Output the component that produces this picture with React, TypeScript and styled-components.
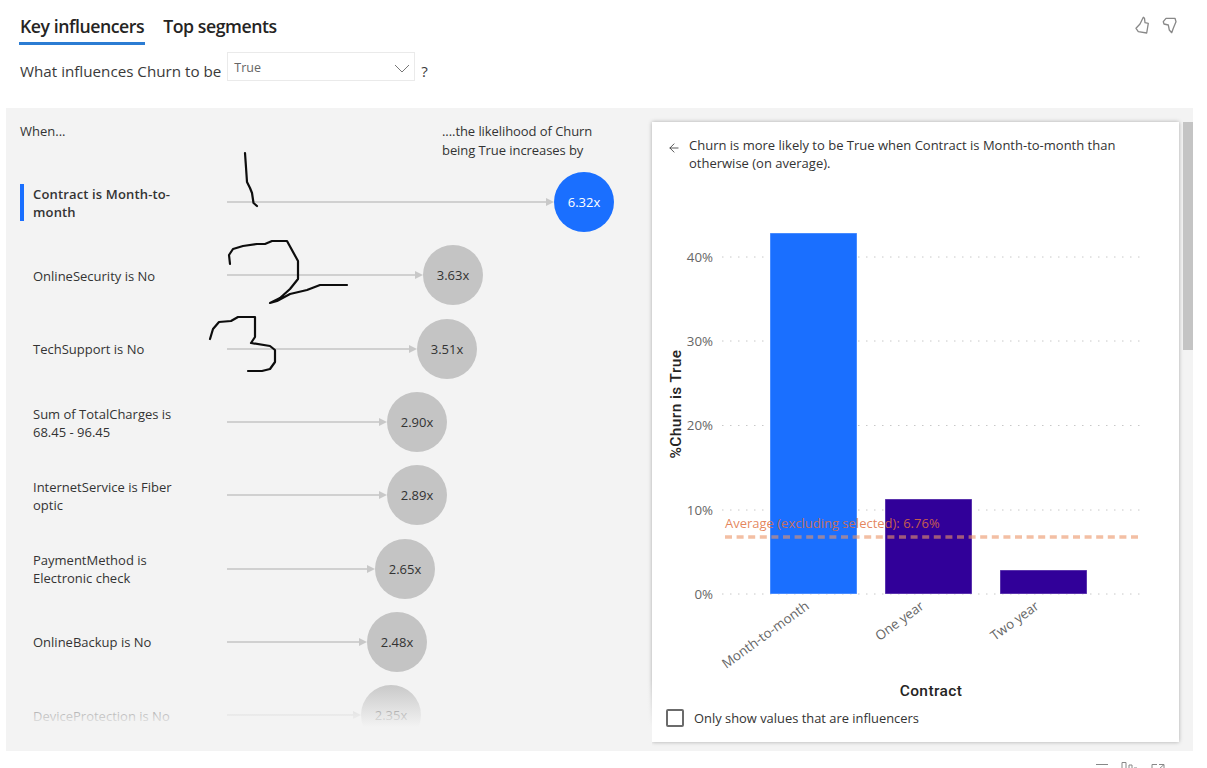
// App.tsx
import React from 'react';
import styled, { createGlobalStyle } from 'styled-components';
import { ArrowLeft } from 'lucide-react';

const FONT = '"Open Sans", "Noto Sans", sans-serif';

const influencers = [
  { label: 'Contract is Month-to-month', value: 6.32, selected: true },
  { label: 'OnlineSecurity is No', value: 3.63 },
  { label: 'TechSupport is No', value: 3.51 },
  { label: 'Sum of TotalCharges is 68.45 - 96.45', value: 2.9 },
  { label: 'InternetService is Fiber optic', value: 2.89 },
  { label: 'PaymentMethod is Electronic check', value: 2.65 },
  { label: 'OnlineBackup is No', value: 2.48 },
  { label: 'DeviceProtection is No', value: 2.35 },
];

// arrow length grows with the multiplier
const arrowWidth = (value: number) => Math.round(453 + (value - 3.63) * 48.7 - 30 - 227);

const gridLines = [
  { label: '0%', y: 594 },
  { label: '10%', y: 510 },
  { label: '20%', y: 425.5 },
  { label: '30%', y: 341 },
  { label: '40%', y: 257 },
];

const bars = [
  { label: 'Month-to-month', x: 770, top: 233, color: '#1a6fff' },
  { label: 'One year', x: 885, top: 499, color: '#310099' },
  { label: 'Two year', x: 1000, top: 570, color: '#310099' },
];

const scribbles = [
  'M245 153 L245.7 163 L247 182 L250 188 L252 193 L253.5 203 L257 206',
  'M230 264 L229 255 L233 249 L243 246 L257 244 L265 244 L272 241 L287 241 L298 261 L298 279 L290 289 L280 298 L270 303 L277 301 L290 294 L307 290 L320 285 L347 285',
  'M210 339 L213 329 L219 322 L231 321 L238 317 L255 317 L255 337 L251 343 L270 346 L275 350 L275 362 L270 369 L262 371 L248 371',
];

const App: React.FC = () => {
  return (
    <Page>
      <GlobalStyle />
      <Header>
        <Tabs>
          <Tab $active>Key influencers</Tab>
          <Tab>Top segments</Tab>
        </Tabs>
        <Feedback>
          <svg width="15" height="18" viewBox="0 0 15 18" fill="none" stroke="currentColor" strokeWidth="1.3" strokeLinejoin="round">
            <path d="M8.3 1.3 L5 8 L1 12.3 L3.3 15.7 L11.7 17 L13.3 7.3 L10 6.7 L9.5 2.3 Z" />
          </svg>
          <svg width="15" height="18" viewBox="0 0 15 18" fill="none" stroke="currentColor" strokeWidth="1.3" strokeLinejoin="round">
            <path d="M1.3 5.7 L4 2.3 L13 2.3 L14 5.7 L11.3 12.3 L9.7 16.7 L7.3 14 L6.3 9 L2 8 Z" />
          </svg>
        </Feedback>
      </Header>
      <Question>
        What influences Churn to be
        <Select>
          True
          <svg width="16" height="9" viewBox="0 0 16 9" fill="none" stroke="#777" strokeWidth="1">
            <path d="M1 1 L8 8 L15 1" />
          </svg>
        </Select>
        ?
      </Question>
      <Panel>
        <LeftPane>
          <ColumnHeads>
            <span>When...</span>
            <Likelihood>
              ....the likelihood of Churn
              <br />
              being True increases by
            </Likelihood>
          </ColumnHeads>
          <List>
            {influencers.map(item => (
              <Row key={item.label}>
                <Marker $selected={item.selected} />
                <Label $selected={item.selected}>{item.label}</Label>
                <Arrow style={{ width: arrowWidth(item.value) }}>
                  <ArrowLine />
                  <ArrowHead />
                </Arrow>
                <Bubble $selected={item.selected}>{item.value.toFixed(2)}x</Bubble>
              </Row>
            ))}
          </List>
          <Fade />
        </LeftPane>
        <Card>
          <CardTitle>
            <ArrowLeft size={14} strokeWidth={1.4} color="#333" />
            <p>Churn is more likely to be True when Contract is Month-to-month than otherwise (on average).</p>
          </CardTitle>
          <Chart viewBox="652 180 527 520">
            {gridLines.map(line => (
              <g key={line.label}>
                <line x1={722} x2={1140} y1={line.y} y2={line.y} stroke="#c8c8c8" strokeWidth={1} strokeDasharray="1.5 6.5" />
                <AxisText x={713} y={line.y + 4.6} textAnchor="end">
                  {line.label}
                </AxisText>
              </g>
            ))}
            {bars.map(bar => (
              <g key={bar.label}>
                <rect x={bar.x} y={bar.top} width={87} height={594 - bar.top} fill={bar.color} stroke="#fff" strokeOpacity={0.4} />
                <AxisText x={bar.x + 40} y={608} textAnchor="end" transform={`rotate(-36 ${bar.x + 40} 608)`}>
                  {bar.label}
                </AxisText>
              </g>
            ))}
            <line x1={725} x2={1138} y1={537} y2={537} stroke="#eb9468" strokeOpacity={0.6} strokeWidth={3.5} strokeDasharray="7 4.6" />
            <AverageText x={725} y={528}>
              Average (excluding selected): 6.76%
            </AverageText>
            <AxisTitle x={931} y={696} textAnchor="middle">
              Contract
            </AxisTitle>
            <AxisTitle x={681} y={404} textAnchor="middle" transform="rotate(-90 681 404)">
              %Churn is True
            </AxisTitle>
          </Chart>
          <CheckRow>
            <CheckBox />
            Only show values that are influencers
          </CheckRow>
        </Card>
        <Scrollbar>
          <ScrollThumb />
        </Scrollbar>
      </Panel>
      <Footer>
        <svg width="100" height="10" viewBox="0 0 100 10" fill="none" stroke="#888" strokeWidth="1">
          <path d="M0 3.5 H12" />
          <path d="M26 10 V1.5 H30 V10 M33 10 V4 H36 V10 M38 10 V7 H41" />
          <path d="M56 10 V3.5 H61 M68 3.5 H63 M68 3.5 V10 M62 9 L68 3.5" />
          <path d="M85 7 L87 9 L89 7" strokeDasharray="1 1" />
        </svg>
      </Footer>
      <Scribbles viewBox="0 0 1207 768">
        {scribbles.map(d => (
          <path key={d} d={d} fill="none" stroke="#0d0d0d" strokeWidth={2.2} strokeLinejoin="round" strokeLinecap="round" />
        ))}
      </Scribbles>
    </Page>
  );
};

const GlobalStyle = createGlobalStyle`
  html, body {
    margin: 0;
    height: 768px;
    overflow: hidden;
    background: #fff;
  }
  body {
    font-family: ${FONT};
    color: #333;
  }
`;

const Page = styled.div`
  position: relative;
  width: 1207px;
  height: 768px;
  overflow: hidden;
`;

const Header = styled.div`
  display: flex;
  justify-content: space-between;
  align-items: flex-start;
  height: 52px;
  padding: 13px 30px 0 19px;
  box-sizing: border-box;
`;

const Tabs = styled.div`
  display: flex;
  gap: 17px;
`;

const Tab = styled.div<{ $active?: boolean }>`
  height: 29px;
  padding: 0 1px;
  font-size: 17.7px;
  line-height: 27px;
  font-weight: 600;
  letter-spacing: -0.45px;
  color: #252423;
  border-bottom: ${p => (p.$active ? '3px solid #2b7cd3' : '3px solid transparent')};
`;

const Feedback = styled.div`
  display: flex;
  gap: 12px;
  padding-top: 3px;
  color: #888;
`;

const Question = styled.div`
  display: flex;
  align-items: flex-end;
  gap: 6px;
  height: 29px;
  padding-left: 20px;
  font-size: 15.2px;
  line-height: 20px;
  color: #3a3a3a;
`;

const Select = styled.div`
  display: flex;
  justify-content: space-between;
  align-items: center;
  width: 188px;
  height: 29px;
  box-sizing: border-box;
  padding: 3px 4px 0 6px;
  border: 1px solid #eaeaea;
  font-size: 12.5px;
  color: #666;
`;

const Panel = styled.div`
  display: flex;
  width: 1187px;
  height: 643px;
  margin: 27px 0 0 6px;
  background: #f3f3f3;
`;

const LeftPane = styled.div`
  position: relative;
  width: 646px;
  overflow: hidden;
`;

const ColumnHeads = styled.div`
  display: flex;
  justify-content: space-between;
  height: 57.5px;
  padding: 14px 0 0 14px;
  box-sizing: border-box;
  font-size: 13px;
  line-height: 19px;
  color: #333;
`;

const Likelihood = styled.div`
  width: 210px;
  letter-spacing: -0.07px;
`;

const List = styled.div`
  display: flex;
  flex-direction: column;
`;

const Row = styled.div`
  display: flex;
  align-items: center;
  flex-shrink: 0;
  height: 73.3px;
  padding-left: 14px;
`;

const Marker = styled.div<{ $selected?: boolean }>`
  width: 4px;
  height: 37px;
  flex-shrink: 0;
  background: ${p => (p.$selected ? '#1a6fff' : 'transparent')};
`;

const Label = styled.div<{ $selected?: boolean }>`
  width: 148px;
  margin: 0 46px 0 9px;
  padding-top: 1px;
  flex-shrink: 0;
  font-size: 13px;
  line-height: 18px;
  letter-spacing: ${p => (p.$selected ? '0.15px' : '0')};
  font-weight: ${p => (p.$selected ? 600 : 400)};
  color: #333;
`;

const Arrow = styled.div`
  display: flex;
  align-items: center;
  flex-shrink: 0;
`;

const ArrowLine = styled.div`
  flex: 1;
  height: 2px;
  background: #d0d0d0;
`;

const ArrowHead = styled.div`
  width: 0;
  height: 0;
  border-left: 8px solid #c8c8c8;
  border-top: 4.5px solid transparent;
  border-bottom: 4.5px solid transparent;
`;

const Bubble = styled.div<{ $selected?: boolean }>`
  display: flex;
  justify-content: center;
  align-items: center;
  flex-shrink: 0;
  width: 60px;
  height: 60px;
  border-radius: 50%;
  font-size: 13px;
  background: ${p => (p.$selected ? '#1a6fff' : '#c4c4c4')};
  color: ${p => (p.$selected ? '#fff' : '#333')};
`;

const Fade = styled.div`
  position: absolute;
  left: 0;
  right: 0;
  bottom: 0;
  height: 71px;
  background: linear-gradient(to bottom, rgba(243, 243, 243, 0) 0, #f3f3f3 47px);
`;

const Card = styled.div`
  display: flex;
  flex-direction: column;
  width: 527px;
  height: 620px;
  margin-top: 14px;
  background: #fff;
  box-shadow: 0 0 4px rgba(0, 0, 0, 0.3);
`;

const CardTitle = styled.div`
  display: flex;
  align-items: flex-start;
  gap: 8px;
  height: 58px;
  padding: 14px 30px 0 15px;
  box-sizing: border-box;
  font-size: 13px;
  line-height: 18px;
  color: #333;

  svg {
    flex-shrink: 0;
    margin-top: 5px;
  }

  p {
    margin: 0;
  }
`;

const Chart = styled.svg`
  display: block;
  width: 527px;
  height: 520px;
`;

const AxisText = styled.text`
  font-family: ${FONT};
  font-size: 13.3px;
  fill: #666;
`;

const AverageText = styled.text`
  font-family: ${FONT};
  font-size: 13px;
  fill: #e0703f;
  fill-opacity: 0.85;
`;

const AxisTitle = styled.text`
  font-family: Roboto, sans-serif;
  font-size: 15.5px;
  font-weight: 500;
  letter-spacing: 0.4px;
  fill: #252423;
`;

const CheckRow = styled.div`
  display: flex;
  align-items: center;
  gap: 10px;
  margin-top: 9px;
  padding-left: 14px;
  font-size: 12.9px;
  color: #333;
`;

const CheckBox = styled.div`
  width: 18px;
  height: 18px;
  box-sizing: border-box;
  border: 2px solid #6b6b6b;
  border-radius: 2px;
`;

const Scrollbar = styled.div`
  width: 10px;
  margin: 14px 0 0 4px;
`;

const ScrollThumb = styled.div`
  height: 228px;
  background: #c4c4c4;
`;

const Footer = styled.div`
  display: flex;
  justify-content: flex-end;
  padding: 10px 11px 0 0;
`;

const Scribbles = styled.svg`
  position: absolute;
  top: 0;
  left: 0;
  width: 1207px;
  height: 768px;
  pointer-events: none;
`;

export default App;
